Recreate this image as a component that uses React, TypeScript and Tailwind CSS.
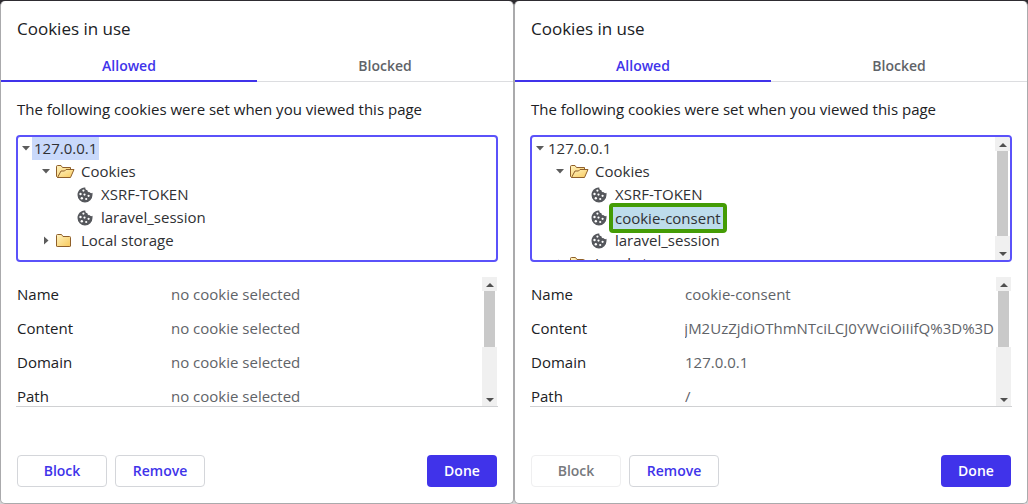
import { useState } from "react";
import type { ReactNode } from "react";

function Caret({ open }: { open: boolean }) {
  return (
    <svg width="9" height="9" viewBox="0 0 9 9" className="fill-[#5c5c5c]">
      {open ? <path d="M0 2h8L4 6.500z" /> : <path d="M2 .5v8L6.500 4.500z" />}
    </svg>
  );
}

function Folder({ open }: { open: boolean }) {
  return (
    <svg width="20" height="16" viewBox="0 0 20 16" className="shrink-0">
      <defs>
        <linearGradient id="folder-fill" x1="0" y1="0" x2="1" y2="1">
          <stop offset="0" stopColor="#fff3c0" />
          <stop offset="1" stopColor="#f8c95c" />
        </linearGradient>
      </defs>
      <g fill="url(#folder-fill)" stroke="#8f5f2a" strokeWidth="1" strokeLinejoin="round">
        {open ? (
          <>
            <path d="M.5 12.500V2.800Q.5 1.500 1.500 1.500H5L6.500 3.500H14.500V6L12 13.500H1.500Z" />
            <path d="M1.500 13.500L5 7H8.500L10 5.500H18L14.500 13.500Z" />
          </>
        ) : (
          <path d="M.5 13V2.500Q.5 1.500 1.500 1.500H5.500L7 3.500H13.500Q14.500 3.500 14.500 4.500V13Q14.500 13.500 13.800 13.500H1.200Q.5 13.500 .5 13Z" />
        )}
      </g>
    </svg>
  );
}

function CookieIcon() {
  return (
    <svg width="16" height="16" viewBox="0 0 16 16" className="shrink-0">
      <path
        fill="#55575c"
        d="M7.500 .5C3.500 .7 .5 4 .5 8A7.500 7.500 0 0 0 15.500 8V5.800C14.400 6.500 13 6.100 12.500 5.100C11.300 5.400 10.300 4.500 10.500 3.300C9.200 3.300 8 2.100 8.300 .5Z"
      />
      <g fill="#fff">
        <circle cx="6.400" cy="3.600" r="1.100" />
        <circle cx="3.500" cy="7" r="1.200" />
        <circle cx="7.500" cy="7.600" r="1.100" />
        <circle cx="4.800" cy="11.300" r="1.200" />
        <circle cx="9.200" cy="12" r="1.100" />
        <circle cx="11.600" cy="8.800" r="1.100" />
      </g>
    </svg>
  );
}

function Scrollbar({ thumb }: { thumb: string }) {
  return (
    <div aria-hidden="true" className="flex w-[15px] shrink-0 flex-col">
      <div className="flex h-3.5 items-center justify-center bg-[#f0f0f0] pt-0.5">
        <svg width="8" height="4" viewBox="0 0 8 4" className="fill-[#505050]">
          <path d="M0 4L4 0L8 4z" />
        </svg>
      </div>
      <div className={thumb} />
      <div className="flex flex-1 items-end justify-center bg-[#f0f0f0] pb-1">
        <svg width="8" height="4" viewBox="0 0 8 4" className="fill-[#505050]">
          <path d="M0 0h8L4 4z" />
        </svg>
      </div>
    </div>
  );
}

function FolderRow({ name, open }: { name: string; open: boolean }) {
  return (
    <button type="button" aria-expanded={open} className="flex h-[23px] items-center pl-6">
      <span className="flex w-3.5 items-center">
        <Caret open={open} />
      </span>
      <Folder open={open} />
      <span className="pl-[5px]">{name}</span>
    </button>
  );
}

function TreeHost({ highlighted, children }: { highlighted: boolean; children: ReactNode }) {
  return (
    <ul className="min-w-0 flex-1">
      <li>
        <button type="button" aria-expanded="true" className="flex h-[23px] items-center pl-1">
          <span className="flex w-2.5 items-center">
            <Caret open />
          </span>
          <span className={highlighted ? "bg-[#c9d9fb] px-0.5 leading-[23px]" : "px-0.5"}>127.0.0.1</span>
        </button>
        <ul>{children}</ul>
      </li>
    </ul>
  );
}

type DialogProps = {
  cookies: string[];
  selected?: string;
  details: [string, string][];
  scrolling?: boolean;
};

function CookieDialog({ cookies, selected, details, scrolling = false }: DialogProps) {
  const [tab, setTab] = useState("Allowed");
  return (
    <section
      aria-label="Cookies in use"
      className="min-w-0 flex-1 rounded-[5px] border-x border-b border-[#aaaaac] bg-white"
    >
      <h1 className="px-4 pt-4 text-[17px] leading-6 text-[#202124]">Cookies in use</h1>
      <div role="tablist" className="mt-2 flex">
        {["Allowed", "Blocked"].map((name) => (
          <button
            key={name}
            type="button"
            role="tab"
            aria-selected={tab === name}
            onClick={() => setTab(name)}
            className={
              tab === name
                ? "h-[33px] flex-1 border-b-2 border-[#4033ea] pt-0.5 text-sm font-semibold text-[#4033ea]"
                : "h-[33px] flex-1 border-b border-[#dcdde0] pt-0.5 text-sm font-semibold text-[#5f6368]"
            }
          >
            {name}
          </button>
        ))}
      </div>
      <div className="px-[15px] pt-[15px]">
        <p className="px-px text-[15px] leading-6 text-[#202124]">
          The following cookies were set when you viewed this page
        </p>
        <div className="mt-3.5 flex h-[127px] overflow-hidden rounded border-2 border-[#5b52fa] text-[15px] text-[#303134]">
          <TreeHost highlighted={!selected}>
            <li>
              <FolderRow name="Cookies" open />
              <ul>
                {cookies.map((cookie) => (
                  <li key={cookie} className="flex h-[23px] items-center pl-[59px]">
                    <CookieIcon />
                    {cookie === selected ? (
                      <button
                        type="button"
                        className="relative z-10 -my-1 ml-0.5 rounded border-4 border-[#449c05] bg-[#bddcec] px-0.5 leading-[22px]"
                      >
                        {cookie}
                      </button>
                    ) : (
                      <button type="button" className="pl-2">
                        {cookie}
                      </button>
                    )}
                  </li>
                ))}
              </ul>
            </li>
            <li>
              <FolderRow name="Local storage" open={false} />
            </li>
          </TreeHost>
          {scrolling && <Scrollbar thumb="mx-0.5 h-[85px] bg-[#c9c9c9]" />}
        </div>
        <div className="mt-[15px] flex h-[130px] overflow-hidden border-b border-[#d0d1d3] px-px text-[15px]">
          <dl className="min-w-0 flex-1">
            {details.map(([label, value]) => (
              <div key={label} className="flex h-[34px] items-center">
                <dt className="w-[154px] shrink-0 text-[#202124]">{label}</dt>
                <dd
                  className={
                    label === "Content" && selected
                      ? "flex min-w-0 flex-1 justify-end overflow-hidden pr-0.5 whitespace-nowrap text-[#5f6368]"
                      : "min-w-0 flex-1 truncate text-[#5f6368]"
                  }
                >
                  {value}
                </dd>
              </div>
            ))}
          </dl>
          <Scrollbar thumb="mx-0.5 h-14 bg-[#c9c9c9]" />
        </div>
      </div>
      <div className="flex gap-2 px-4 pt-12 pb-4 text-sm font-semibold">
        <button
          type="button"
          disabled={Boolean(selected)}
          className="h-8 w-[90px] rounded border border-[#d4d6da] text-[#4033ea] disabled:border-[#efeff0] disabled:text-[#77797d]"
        >
          Block
        </button>
        <button type="button" className="h-8 w-[90px] rounded border border-[#d4d6da] text-[#4033ea]">
          Remove
        </button>
        <button type="button" className="ml-auto h-8 w-[70px] rounded bg-[#4033ea] text-white">
          Done
        </button>
      </div>
    </section>
  );
}

export default function App() {
  const none = "no cookie selected";
  return (
    <main className="flex bg-[linear-gradient(#2e2c31_50%,#d4d4d6_50%)] pt-px font-['Open_Sans',sans-serif]">
      <CookieDialog
        cookies={["XSRF-TOKEN", "laravel_session"]}
        details={[
          ["Name", none],
          ["Content", none],
          ["Domain", none],
          ["Path", none],
        ]}
      />
      <CookieDialog
        cookies={["XSRF-TOKEN", "cookie-consent", "laravel_session"]}
        selected="cookie-consent"
        scrolling
        details={[
          ["Name", "cookie-consent"],
          ["Content", "jM2UzZjdiOThmNTciLCJ0YWciOiIifQ%3D%3D"],
          ["Domain", "127.0.0.1"],
          ["Path", "/"],
        ]}
      />
    </main>
  );
}
